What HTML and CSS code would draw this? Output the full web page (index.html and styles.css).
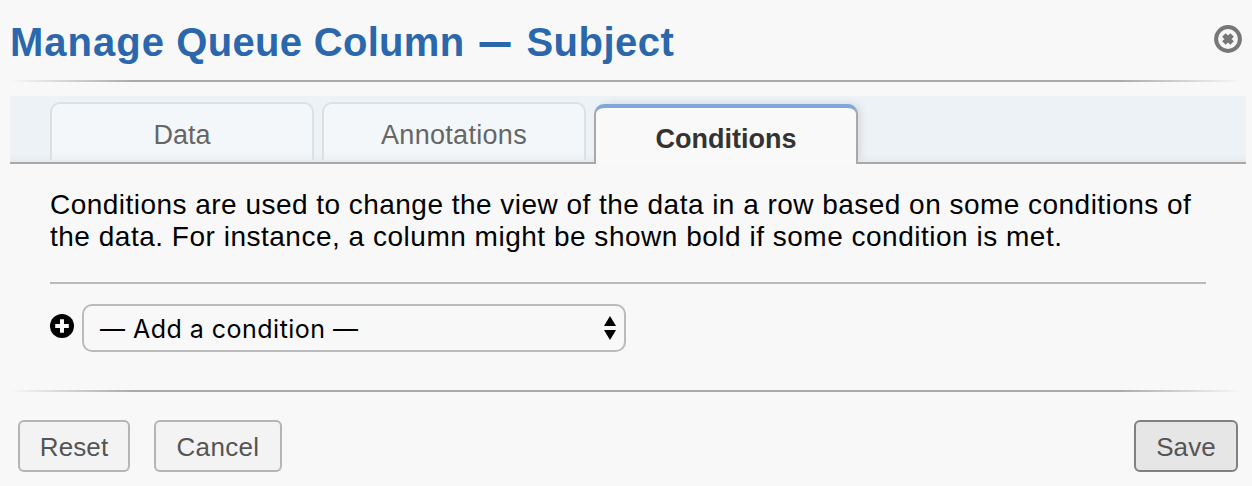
FILE: index.html
```html
<!DOCTYPE html>
<html lang="en">
<head>
<meta charset="utf-8">
<title>Manage Queue Column</title>
<link rel="stylesheet" href="styles.css">
</head>
<body>
<main class="dialog">
  <header class="header">
    <h1 class="title"><span class="name"><span class="first">Manage</span> Queue Column</span><span class="dash">—</span><span class="subject">Subject</span></h1>
    <svg class="close" viewBox="0 0 28 28"><circle cx="14" cy="14" r="11.9" fill="none" stroke="#777" stroke-width="4"/><path d="M9.9 9.9l8.2 8.2M18.1 9.9l-8.2 8.2" stroke="#777" stroke-width="5"/></svg>
  </header>
  <div class="rule"></div>
  <nav class="tabs">
    <a class="tab data">Data</a>
    <a class="tab annotations">Annotations</a>
    <a class="tab active">Conditions</a>
  </nav>
  <section class="panel">
    <p class="intro">Conditions are used to change the view of the data in a row based on some conditions of<br><span class="line">the data. For instance, a column might be shown bold if some condition is met.</span></p>
    <div class="add">
      <svg class="plus" viewBox="0 0 24 24"><circle cx="12" cy="12" r="12"/><path d="M12 5.2v13.6M5.2 12h13.6" stroke="#f8f8f8" stroke-width="4"/></svg>
      <div class="select"><span class="option">— Add a condition —</span>
        <svg class="arrows" viewBox="0 0 12 24"><path d="M6 0l6 10H0zM6 24l6-10H0z"/></svg>
      </div>
    </div>
  </section>
  <div class="rule"></div>
  <footer class="footer">
    <button class="btn reset">Reset</button>
    <button class="btn cancel">Cancel</button>
    <button class="btn save">Save</button>
  </footer>
</main>
</body>
</html>
```
FILE: styles.css
```css
* { box-sizing: border-box; }
body { margin: 0; background: #f8f8f8; font-family: "Liberation Sans", Arial, sans-serif; font-size: 26px; color: #000; }
.dialog { width: 1252px; height: 486px; overflow: hidden; }
.header { height: 80px; padding: 19px 10px 0; display: flex; justify-content: space-between; }
.title { margin: 0; display: flex; font-size: 40px; line-height: 46px; color: #2a67ac; white-space: nowrap; letter-spacing: .5px; }
.name { letter-spacing: .3px; }
.first { letter-spacing: 1px; }
.dash { font-size: 29px; margin: 0 17px 0 16px; padding-top: 1px; letter-spacing: 0; -webkit-text-stroke: 2px #2a67ac; }
.close { width: 28px; height: 28px; margin-top: 6px; }
.rule { height: 2px; margin: 0 10px; background: linear-gradient(to right, transparent, #aaa 10%, #aaa 90%, transparent); }
.tabs { height: 68px; margin: 14px 6px 0 10px; padding: 6px 40px 0; display: flex; gap: 8px; background: linear-gradient(to bottom, #ecf2f6 58px, #e4eaee 66px); border-bottom: 2px solid #a9a9a9; }
.tab { width: 264px; height: 58px; border: 2px solid #dde0e3; border-bottom: 0; border-radius: 10px 10px 0 0; background: linear-gradient(to bottom, #f3f7fa 48px, #edf1f4); color: #666; text-align: center; line-height: 62px; white-space: nowrap; font-size: 27px; }
.tab.annotations { letter-spacing: .3px; }
.tab.active { height: 60px; margin-top: 2px; border-color: #7ea8d8 #a9a9a9; border-top-width: 4px; background: #f9f9f9; box-shadow: 4px -2px 10px -3px rgba(0,0,0,.14); color: #333; font-weight: bold; line-height: 62px; clip-path: inset(-8px -12px 0 -8px); }
.panel { height: 226px; padding: 25px 46px 0 50px; }
.intro { margin: 0; height: 95px; border-bottom: 2px solid #bbb; line-height: 32px; white-space: nowrap; font-size: 28px; letter-spacing: .47px; }
.line { letter-spacing: .51px; }
.add { display: flex; padding-top: 20px; gap: 8px; }
.plus { width: 24px; height: 24px; margin-top: 10px; }
.select { width: 544px; height: 48px; border: 2px solid #bbb; border-radius: 10px; padding: 0 8px 0 16px; display: flex; align-items: center; justify-content: space-between; font-family: Inter, sans-serif; font-size: 25px; letter-spacing: .48px; }
.option { padding-top: 2px; }
.arrows { width: 12px; height: 24px; }
.footer { padding: 28px 14px 0 18px; display: flex; gap: 24px; }
.btn { height: 52px; border: 2px solid #b5b5b5; border-radius: 6px; background: #f3f3f3; color: #555; font: 26px/48px "Liberation Sans", Arial, sans-serif; padding: 1px 0 0; letter-spacing: .1px; }
.reset { width: 112px; }
.cancel { width: 128px; letter-spacing: .35px; }
.save { width: 104px; margin-left: auto; background: #e6e6e6; border-color: #808080; }
```
